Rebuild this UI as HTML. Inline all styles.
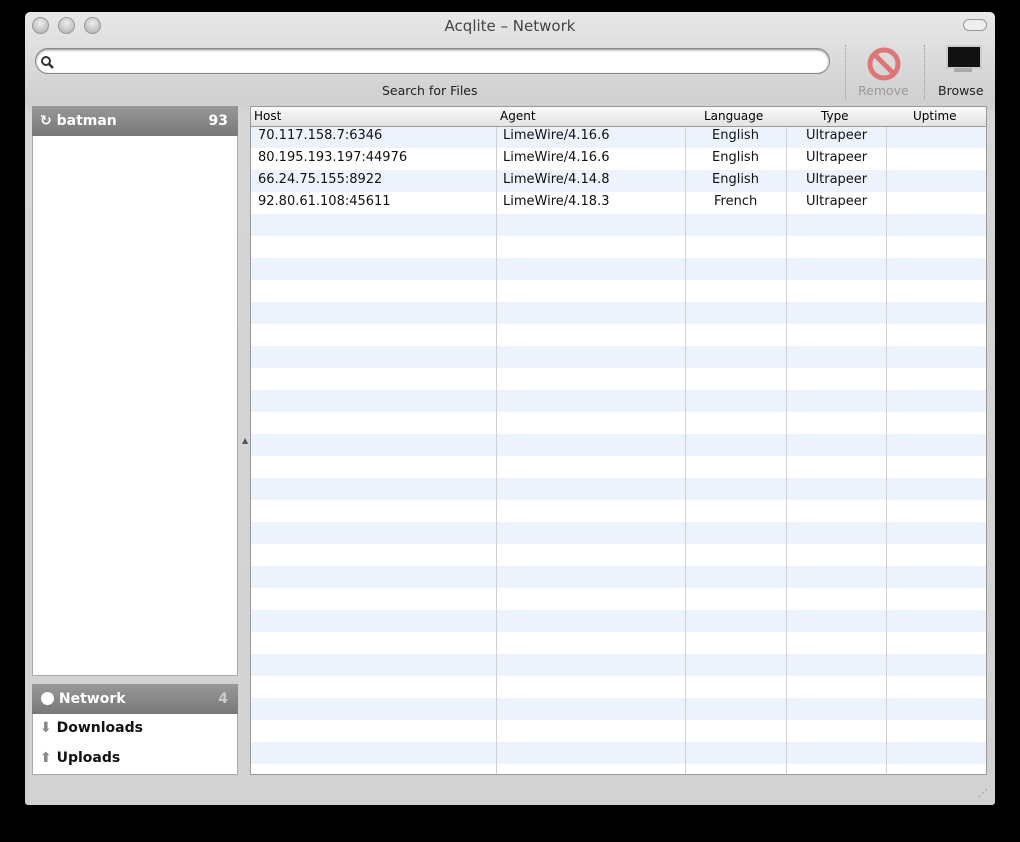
<!DOCTYPE html><html><head><style>
body{margin:0;width:1020px;height:842px;background:#000;font-family:"DejaVu Sans","Liberation Sans",sans-serif;position:relative;overflow:hidden}
.win{position:absolute;left:25px;top:12px;width:970px;height:793px;background:linear-gradient(#e8e8e8,#cfcfcf 90px,#d6d6d6 100px,#d2d2d2);border-radius:5px 5px 3px 3px}
.a{position:absolute}
.dot{position:absolute;top:5px;width:15px;height:15px;border-radius:50%;background:radial-gradient(circle at 50% 35%,#eee,#aaa);border:1px solid #999}
.t{font-size:12.5px;color:#222}
.tbl{left:250px;top:106px;width:737px;height:669px;background:#fff;border:1px solid #999;box-sizing:border-box;overflow:hidden}
.rows{position:absolute;left:0;top:19px;right:0;bottom:0;background:repeating-linear-gradient(#edf3fd 0 22px,#fff 22px 44px)}
.hd{position:absolute;top:0;left:0;right:0;height:19px;background:linear-gradient(#fafafa,#e2e2e2);border-bottom:1px solid #999;font-size:12px}
.vl{position:absolute;top:0;bottom:0;width:1px;background:#d0d0d0}
.r{position:absolute;font-size:13px;color:#111;height:22px;line-height:22px}
</style></head><body>
<div class="win">
<div class="dot" style="left:7px"></div><div class="dot" style="left:33px"></div><div class="dot" style="left:59px"></div>
<div class="a" style="left:938px;top:7px;width:22px;height:10px;border:1px solid #999;border-radius:6px;background:#eee"></div>
<div class="a" style="left:0;width:970px;top:5px;text-align:center;font-size:15px;color:#444">Acqlite – Network</div>
<div class="a" style="left:10px;top:36px;width:793px;height:24px;background:#fff;border:1px solid #888;border-radius:13px;box-shadow:inset 0 1px 2px #888"></div>
<svg class="a" style="left:15px;top:43px" width="14" height="14"><circle cx="6" cy="6" r="4" fill="none" stroke="#333" stroke-width="2"/><line x1="9" y1="9" x2="13" y2="13" stroke="#333" stroke-width="2.5"/></svg>
<div class="a t" style="left:357px;top:71px">Search for Files</div>
<div class="a" style="left:820px;top:33px;height:54px;border-left:1px dotted #999"></div>
<div class="a" style="left:899px;top:33px;height:54px;border-left:1px dotted #999"></div>
<svg class="a" style="left:841px;top:34px" width="36" height="36"><circle cx="18" cy="18" r="14" fill="none" stroke="#d77" stroke-width="5"/><line x1="8" y1="8" x2="28" y2="28" stroke="#d77" stroke-width="5"/></svg>
<div class="a" style="left:833px;top:71px;font-size:12.5px;color:#999">Remove</div>
<div class="a" style="left:921px;top:33px;width:32px;height:20px;background:#111;border:2px solid #ccc"></div>
<div class="a" style="left:929px;top:56px;width:18px;height:4px;background:#aaa"></div>
<div class="a t" style="left:913px;top:71px">Browse</div>
</div>
<div class="a" style="left:32px;top:106px;width:206px;height:570px;background:#fff;border:1px solid #aaa;box-sizing:border-box"></div>
<div class="a" style="left:32px;top:106px;width:206px;height:30px;background:linear-gradient(#999,#777);color:#fff;font-weight:bold;font-size:14px;line-height:30px"><span style="margin-left:8px">↻ batman</span><span style="position:absolute;right:10px">93</span></div>
<div class="a" style="left:32px;top:684px;width:206px;height:91px;background:#fff;border:1px solid #aaa;box-sizing:border-box"></div>
<div class="a" style="left:32px;top:684px;width:206px;height:30px;background:linear-gradient(#999,#777);color:#fff;font-weight:bold;font-size:14px;line-height:30px"><span style="margin-left:9px;display:inline-block;width:13px;height:13px;border-radius:50%;background:#fff;vertical-align:-2px"></span> Network<span style="position:absolute;right:10px;color:#ccc">4</span></div>
<div class="a" style="left:40px;top:720px;font-weight:bold;font-size:14px;color:#111"><span style="color:#888">⬇</span> Downloads</div>
<div class="a" style="left:40px;top:750px;font-weight:bold;font-size:14px;color:#111"><span style="color:#888">⬆</span> Uploads</div>
<div class="a" style="left:242px;top:436px;font-size:8px;color:#555">▲</div>
<div class="a tbl">
<div class="rows"></div>
<div class="vl" style="left:245px"></div><div class="vl" style="left:434px"></div><div class="vl" style="left:535px"></div><div class="vl" style="left:635px"></div>
<div class="hd"><span class="a" style="left:3px;top:2px">Host</span><span class="a" style="left:249px;top:2px">Agent</span><span class="a" style="left:453px;top:2px">Language</span><span class="a" style="left:570px;top:2px">Type</span><span class="a" style="left:662px;top:2px">Uptime</span></div>
<div class="r" style="left:7px;top:18px">70.117.158.7:6346</div><div class="r" style="left:252px;top:18px">LimeWire/4.16.6</div><div class="r" style="left:461px;top:18px">English</div><div class="r" style="left:555px;top:18px">Ultrapeer</div>
<div class="r" style="left:7px;top:40px">80.195.193.197:44976</div><div class="r" style="left:252px;top:40px">LimeWire/4.16.6</div><div class="r" style="left:461px;top:40px">English</div><div class="r" style="left:555px;top:40px">Ultrapeer</div>
<div class="r" style="left:7px;top:62px">66.24.75.155:8922</div><div class="r" style="left:252px;top:62px">LimeWire/4.14.8</div><div class="r" style="left:461px;top:62px">English</div><div class="r" style="left:555px;top:62px">Ultrapeer</div>
<div class="r" style="left:7px;top:84px">92.80.61.108:45611</div><div class="r" style="left:252px;top:84px">LimeWire/4.18.3</div><div class="r" style="left:463px;top:84px">French</div><div class="r" style="left:555px;top:84px">Ultrapeer</div>
</div>
<div class="a" style="left:978px;top:788px;font-size:10px;color:#888">⋰</div>
</body></html>
